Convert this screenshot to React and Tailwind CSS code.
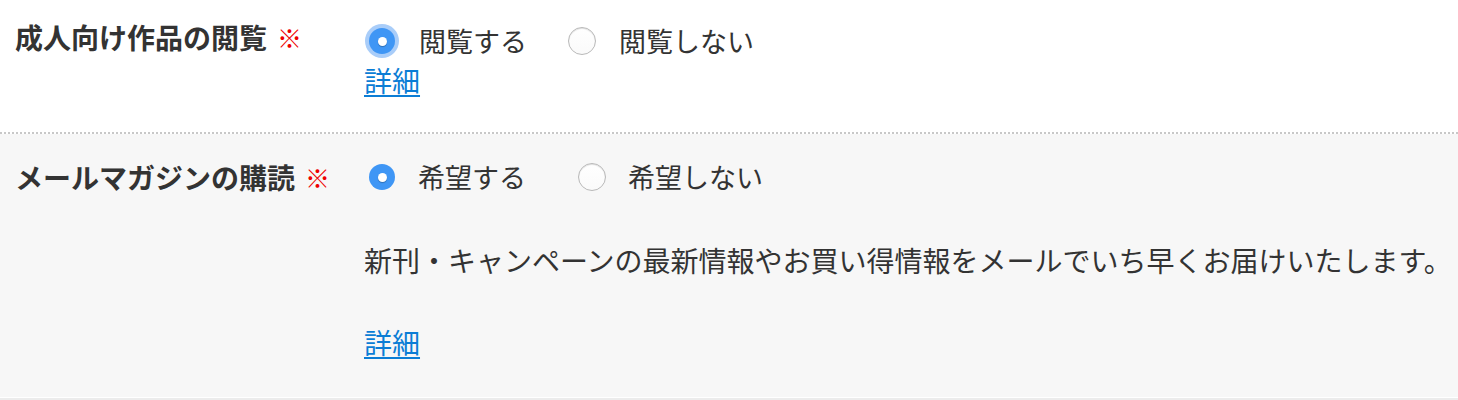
import React from "react";

const font = { fontFamily: '"Noto Sans CJK JP", "Noto Sans", sans-serif' };

function CheckedRadio({ focus }) {
  return (
    <span className="relative flex h-[26px] w-[26px] shrink-0 items-center justify-center">
      {focus && (
        <span className="absolute -inset-[4px] rounded-full bg-[#a9cdf9]" />
      )}
      <span className="relative flex h-[26px] w-[26px] items-center justify-center rounded-full bg-[#3f96f5]">
        <span className="h-[9px] w-[9px] rounded-full bg-white shadow-[0_1px_1px_rgba(0,0,0,0.25)]" />
      </span>
    </span>
  );
}

function EmptyRadio() {
  return (
    <span className="h-[28px] w-[28px] shrink-0 rounded-full border border-[#b9b9b9] bg-gradient-to-b from-[#ffffff] to-[#fafafa] shadow-[inset_0_1px_1px_rgba(0,0,0,0.12)]" />
  );
}

function Required() {
  return <span className="ml-[10px] text-[25px] font-bold leading-none text-[#ee0000]">※</span>;
}

export default function App() {
  return (
    <div className="w-[1458px] h-[400px] overflow-hidden bg-[#ececec] text-[#333]" style={font}>
      {/* Row 1 */}
      <div className="flex h-[134px] border-b-2 border-dotted border-[#c8c8c8] bg-white">
        <div className="w-[364px] shrink-0 pl-[15px] pt-[17px]">
          <div className="flex items-center text-[28px] font-bold leading-[40px]">
            成人向け作品の閲覧<Required />
          </div>
        </div>
        <div className="min-w-0 flex-1 pt-[21px]">
          <div className="flex h-[40px] items-center text-[27px]">
            <div className="flex w-[204px] items-center pl-[5px]">
              <CheckedRadio focus />
              <span className="ml-[24px]">閲覧する</span>
            </div>
            <div className="flex items-center">
              <EmptyRadio />
              <span className="ml-[23px]">閲覧しない</span>
            </div>
          </div>
          <a href="#" className="block w-fit text-[28px] leading-[38px] text-[#0b7dd5] underline underline-offset-[3px]">
            詳細
          </a>
        </div>
      </div>

      {/* Row 2 */}
      <div className="flex h-[263px] bg-[#f7f7f7]">
        <div className="w-[364px] shrink-0 pl-[15px] pt-[23px]">
          <div className="flex items-center text-[28px] font-bold leading-[40px]">
            メールマガジンの購読<Required />
          </div>
        </div>
        <div className="min-w-0 flex-1 pt-[23px]">
          <div className="flex h-[40px] items-center text-[27px]">
            <div className="flex w-[214px] items-center pl-[5px]">
              <CheckedRadio />
              <span className="ml-[23px]">希望する</span>
            </div>
            <div className="flex items-center">
              <EmptyRadio />
              <span className="ml-[22px]">希望しない</span>
            </div>
          </div>
          <p className="mt-[43px] whitespace-nowrap text-[28px] leading-[40px]">
            新刊・キャンペーンの最新情報やお買い得情報をメールでいち早くお届けいたします。
          </p>
          <a href="#" className="mt-[42px] block w-fit text-[28px] leading-[40px] text-[#0b7dd5] underline underline-offset-[3px]">
            詳細
          </a>
        </div>
      </div>
      <div className="h-px bg-white" />
    </div>
  );
}
